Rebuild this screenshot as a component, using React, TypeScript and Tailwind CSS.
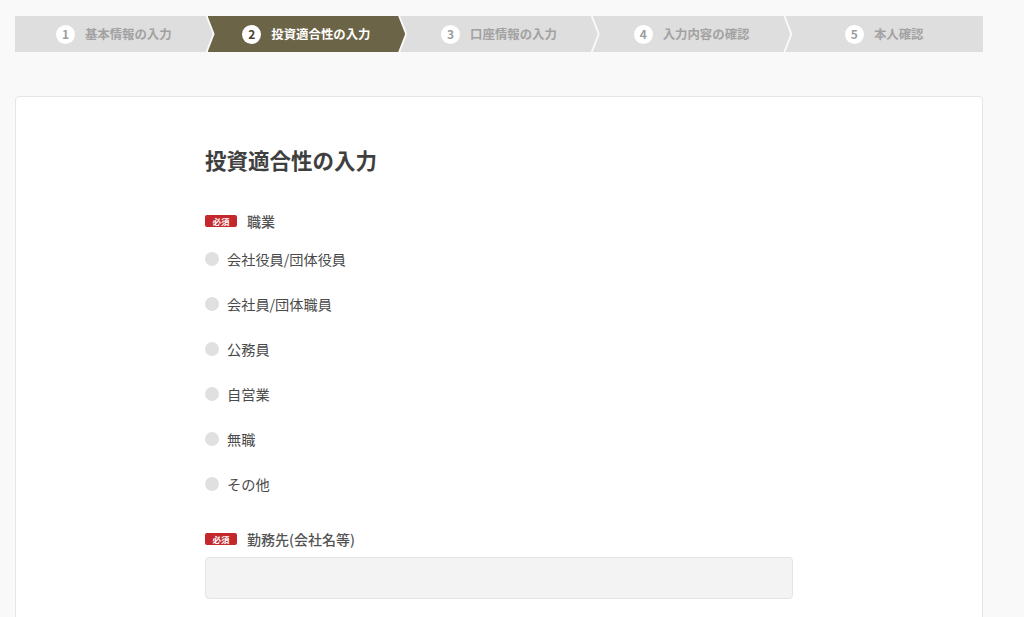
import React from 'react';

const steps = ['基本情報の入力', '投資適合性の入力', '口座情報の入力', '入力内容の確認', '本人確認'];
const current = 1;

const occupations = ['会社役員/団体役員', '会社員/団体職員', '公務員', '自営業', '無職', 'その他'];

function StepBar() {
  return (
    <div className="flex h-[36px] w-[968px]">
      {steps.map((label, i) => {
        const active = i === current;
        // clip shapes: first has flat left, last has flat right
        const shape =
          i === 0
            ? '[clip-path:polygon(0_0,calc(100%_-_7px)_0,100%_50%,calc(100%_-_7px)_100%,0_100%)]'
            : i === steps.length - 1
            ? '[clip-path:polygon(0_0,100%_0,100%_100%,0_100%,7px_50%)]'
            : '[clip-path:polygon(0_0,calc(100%_-_7px)_0,100%_50%,calc(100%_-_7px)_100%,0_100%,7px_50%)]';
        return (
          <div
            key={label}
            className={`flex flex-1 items-center justify-center gap-[10px] ${i > 0 ? '-ml-[5px]' : ''} ${shape} ${
              active ? 'bg-[#6c6447]' : 'bg-[#dedede]'
            }`}
          >
            <span
              className={`flex h-[19px] w-[19px] items-center justify-center rounded-full bg-white text-[12px] font-bold leading-none ${
                active ? 'text-[#4a4433]' : 'text-[#9d9d9d]'
              }`}
            >
              {i + 1}
            </span>
            <span className={`text-[12.4px] font-bold ${active ? 'text-white' : 'text-[#a2a2a2]'}`}>{label}</span>
          </div>
        );
      })}
    </div>
  );
}

function Required() {
  return (
    <span className="flex h-[12px] w-[32px] items-center justify-center rounded-[2px] bg-[#c4282c] text-[8.5px] font-bold leading-none text-white">
      必須
    </span>
  );
}

export default function App() {
  return (
    <div
      className="h-[617px] overflow-hidden bg-[#f9f9f9] pl-[15px] pt-[16px] text-[#444]"
      style={{ fontFamily: '"Noto Sans CJK JP", "Noto Sans", sans-serif' }}
    >
      <StepBar />

      <div className="mt-[44px] h-[560px] w-[968px] rounded-[4px] border border-[#e6e6e6] bg-white">
        <div className="mx-auto w-[588px] pt-[48px]">
          <h1 className="text-[21.5px] font-bold leading-[30px] text-[#3f3f3f]">投資適合性の入力</h1>

          <div className="mt-[36px] flex h-[20px] items-center gap-[10px]">
            <Required />
            <span className="text-[14px] font-medium text-[#555]">職業</span>
          </div>

          <div className="mt-[18px] flex flex-col gap-[25px]">
            {occupations.map((o) => (
              <label key={o} className="flex h-[20px] items-center gap-[8px]">
                <span className="h-[14px] w-[14px] rounded-full bg-[#e0e0e0]" />
                <span className="text-[14.2px] leading-[20px] text-[#4a4a4a]">{o}</span>
              </label>
            ))}
          </div>

          <div className="mt-[35px] flex h-[20px] items-center gap-[10px]">
            <Required />
            <span className="text-[14px] font-medium text-[#555]">勤務先(会社名等)</span>
          </div>

          <input
            type="text"
            className="mt-[8px] block h-[42px] w-full rounded-[4px] border border-[#e4e4e4] bg-[#f3f3f3] px-3 text-[14px] outline-none"
          />
        </div>
      </div>
    </div>
  );
}
